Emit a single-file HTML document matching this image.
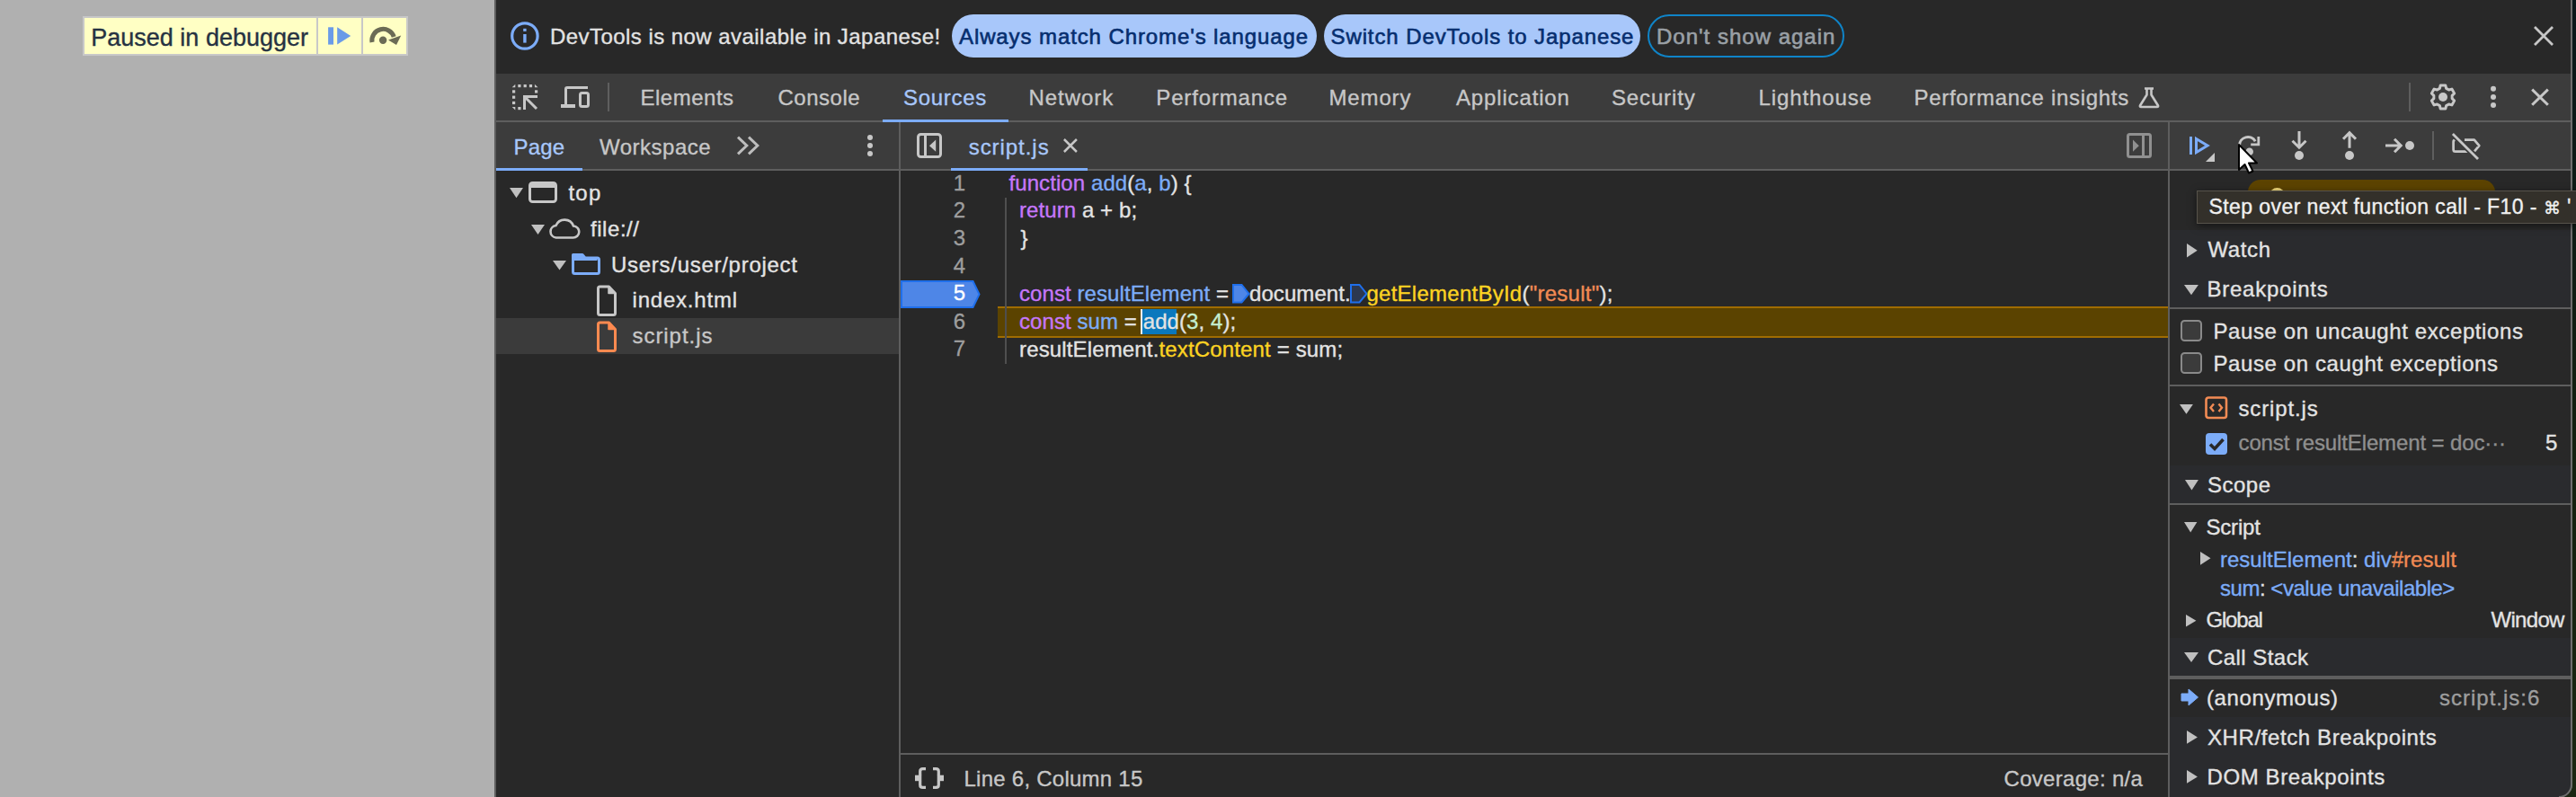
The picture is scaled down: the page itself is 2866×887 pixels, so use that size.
<!DOCTYPE html>
<html><head><meta charset="utf-8">
<style>
*{margin:0;padding:0;box-sizing:border-box}
html,body{width:2866px;height:887px;overflow:hidden;background:#0e120a}
body{position:relative;font-family:"Liberation Sans",sans-serif;font-size:24px;color:#e3e3e3}
.a{position:absolute}
.t{position:absolute;white-space:pre;line-height:40px;height:40px;font-size:24px;-webkit-text-stroke:0.35px currentColor}
svg{position:absolute;overflow:visible}
</style></head><body>
<div class="a" style="left:0px;top:0px;width:550px;height:887px;background:#b0b0b0;"></div>
<div class="a" style="left:550px;top:0px;width:2px;height:887px;background:#5e5e5e;"></div>
<div class="a" style="left:92px;top:18px;width:362px;height:44px;background:#c8c8c8;"></div>
<div class="a" style="left:94px;top:20px;width:258px;height:40px;background:#ffffc4;"></div>
<div class="a" style="left:354px;top:20px;width:48px;height:40px;background:#ffffc4;"></div>
<div class="a" style="left:404px;top:20px;width:48px;height:40px;background:#ffffc4;"></div>
<div class="t" style="left:101.3px;top:21.94px;color:#263242;font-size:27px;letter-spacing:0px;">Paused in debugger</div>
<svg style="left:360px;top:26px;" width="40" height="30" viewBox="0 0 40 30"><rect x="5.1" y="4.3" width="5.9" height="19.3" fill="#6a9be8"/><path d="M15.2 4.3 L30.2 14 L15.2 23.6 Z" fill="#6a9be8"/></svg>
<svg style="left:405px;top:25px;" width="48" height="30" viewBox="0 0 48 30"><path d="M9 22 A 12.5 12.5 0 0 1 33.2 16" fill="none" stroke="#6b6b55" stroke-width="5"/><path d="M27 19.5 L41.2 14.6 L36 25 Z" fill="#6b6b55"/><circle cx="21.1" cy="19.7" r="4.2" fill="#6b6b55"/></svg>
<div class="a" style="left:552px;top:0px;width:2310px;height:887px;background:#282828;"></div>
<div class="a" style="left:2860px;top:0px;width:2px;height:887px;background:#6e6e6e;"></div>
<div class="a" style="left:2862px;top:0px;width:4px;height:887px;background:#0a171a;background:linear-gradient(#0a171a,#14200f 60%,#1b2612)"></div>
<div class="a" style="left:552px;top:0px;width:2308px;height:82px;background:#282828;"></div>
<div class="a" style="left:552px;top:82px;width:2308px;height:52px;background:#3c3c3c;"></div>
<div class="a" style="left:552px;top:134px;width:2308px;height:2px;background:#5e5e5e;"></div>
<div class="a" style="left:552px;top:136px;width:2308px;height:52px;background:#3c3c3c;"></div>
<div class="a" style="left:552px;top:188px;width:2308px;height:2px;background:#5e5e5e;"></div>
<svg style="left:566px;top:23px;" width="36" height="36" viewBox="0 0 36 36"><circle cx="17.9" cy="17" r="14.2" fill="none" stroke="#7cacf8" stroke-width="3.2"/><rect x="16.2" y="8.8" width="3.4" height="3.1" fill="#7cacf8"/><rect x="16.2" y="15" width="3.4" height="9.6" fill="#7cacf8"/></svg>
<div class="t" style="left:612px;top:20.98px;color:#e3e3e3;font-size:24px;letter-spacing:0.45px;">DevTools is now available in Japanese!</div>
<div class="a" style="left:1059px;top:16px;width:406px;height:48px;background:#a8c7fa;border-radius:24px;"></div>
<div class="t" style="left:1067px;top:20.58px;color:#062e6f;font-size:24px;letter-spacing:0.9px;-webkit-text-stroke:0.6px #062e6f;">Always match Chrome's language</div>
<div class="a" style="left:1473px;top:16px;width:352px;height:48px;background:#a8c7fa;border-radius:24px;"></div>
<div class="t" style="left:1480.5px;top:20.58px;color:#062e6f;font-size:24px;letter-spacing:0.9px;-webkit-text-stroke:0.6px #062e6f;">Switch DevTools to Japanese</div>
<div class="a" style="left:1833px;top:16px;width:219px;height:48px;background:transparent;border-radius:24px;border:2px solid #0f84c8;"></div>
<div class="t" style="left:1843px;top:20.58px;color:#9aa0a6;font-size:24px;letter-spacing:1.0px;-webkit-text-stroke:0.6px #9aa0a6;">Don't show again</div>
<svg style="left:2816px;top:26px;" width="28" height="28" viewBox="0 0 28 28"><path d="M4 4 L24 24 M24 4 L4 24" stroke="#c7c7c7" stroke-width="2.8"/></svg>
<svg style="left:570px;top:94px;" width="30" height="30" viewBox="0 0 30 30"><rect x="6.3" y="0.0" width="3.2" height="3.2" fill="#c7c7c7"/><rect x="12.6" y="0.0" width="3.2" height="3.2" fill="#c7c7c7"/><rect x="18.9" y="0.0" width="3.2" height="3.2" fill="#c7c7c7"/><rect x="0.0" y="6.3" width="3.2" height="3.2" fill="#c7c7c7"/><rect x="0.0" y="12.6" width="3.2" height="3.2" fill="#c7c7c7"/><rect x="0.0" y="18.9" width="3.2" height="3.2" fill="#c7c7c7"/><rect x="25.0" y="6.3" width="3.2" height="3.2" fill="#c7c7c7"/><rect x="6.3" y="25.0" width="3.2" height="3.2" fill="#c7c7c7"/><path d="M-0.3 3.3 L3.3 -0.3 V3.3 Z M24.9 -0.3 L28.5 3.3 H24.9 Z M-0.3 24.9 H3.3 V28.5 Z" fill="#c7c7c7"/><path d="M28 13.5 H13.5 V28" fill="none" stroke="#c7c7c7" stroke-width="3"/><path d="M15 15 L27 27" stroke="#c7c7c7" stroke-width="3"/></svg>
<svg style="left:624px;top:96px;" width="34" height="26" viewBox="0 0 34 26"><path d="M30 1.5 H7 Q5.5 1.5 5.5 3 V21" fill="none" stroke="#c7c7c7" stroke-width="3"/><rect x="0" y="20" width="16" height="4" fill="#c7c7c7"/><rect x="21.5" y="7.5" width="9" height="15" rx="2" fill="none" stroke="#c7c7c7" stroke-width="3"/></svg>
<div class="a" style="left:676px;top:92px;width:2px;height:32px;background:#5e5e5e;"></div>
<div class="t" style="left:712.5px;top:89.18px;color:#c7c7c7;font-size:24px;letter-spacing:0.5px;">Elements</div>
<div class="t" style="left:865.5px;top:89.18px;color:#c7c7c7;font-size:24px;letter-spacing:0.5px;">Console</div>
<div class="t" style="left:1005px;top:89.18px;color:#a8c7fa;font-size:24px;letter-spacing:0.7px;">Sources</div>
<div class="t" style="left:1144.5px;top:89.18px;color:#c7c7c7;font-size:24px;letter-spacing:0.95px;">Network</div>
<div class="t" style="left:1286.3px;top:89.18px;color:#c7c7c7;font-size:24px;letter-spacing:0.85px;">Performance</div>
<div class="t" style="left:1478.5px;top:89.18px;color:#c7c7c7;font-size:24px;letter-spacing:0.85px;">Memory</div>
<div class="t" style="left:1620px;top:89.18px;color:#c7c7c7;font-size:24px;letter-spacing:0.85px;">Application</div>
<div class="t" style="left:1793px;top:89.18px;color:#c7c7c7;font-size:24px;letter-spacing:0.85px;">Security</div>
<div class="t" style="left:1956.5px;top:89.18px;color:#c7c7c7;font-size:24px;letter-spacing:0.9px;">Lighthouse</div>
<div class="t" style="left:2129.5px;top:89.18px;color:#c7c7c7;font-size:24px;letter-spacing:0.7px;">Performance insights</div>
<div class="a" style="left:982px;top:133px;width:140px;height:3px;background:#7cacf8;"></div>
<svg style="left:2378px;top:96px;" width="28" height="26" viewBox="0 0 28 26"><path d="M8 2.5 H18 M10.5 2.5 V9.5 L3 21.5 Q2.5 23 4 23 H22 Q23.5 23 23 21.5 L15.5 9.5 V2.5" fill="none" stroke="#c7c7c7" stroke-width="2.6" stroke-linejoin="round"/></svg>
<div class="a" style="left:2680px;top:92px;width:2px;height:32px;background:#5e5e5e;"></div>
<svg style="left:2700px;top:90px;" width="36" height="36" viewBox="0 0 36 36"><path d="M14.37 8.36 L15.23 4.99 L20.77 4.99 L21.63 8.36 L24.53 10.04 L27.88 9.10 L30.65 13.90 L28.16 16.32 L28.16 19.68 L30.65 22.10 L27.88 26.90 L24.53 25.96 L21.63 27.64 L20.77 31.01 L15.23 31.01 L14.37 27.64 L11.47 25.96 L8.12 26.90 L5.35 22.10 L7.84 19.68 L7.84 16.32 L5.35 13.90 L8.12 9.10 L11.47 10.04 Z" fill="none" stroke="#c7c7c7" stroke-width="3" stroke-linejoin="round"/><circle cx="18" cy="18" r="5" fill="#c7c7c7"/></svg>
<svg style="left:2768px;top:92px;" width="12" height="32" viewBox="0 0 12 32"><circle cx="6" cy="6.8" r="3" fill="#c7c7c7"/><circle cx="6" cy="16" r="3" fill="#c7c7c7"/><circle cx="6" cy="24.9" r="3" fill="#c7c7c7"/></svg>
<svg style="left:2812px;top:94px;" width="28" height="28" viewBox="0 0 28 28"><path d="M5.2 5.6 L22.8 22.8 M22.8 5.6 L5.2 22.8" stroke="#c7c7c7" stroke-width="3"/></svg>
<div class="t" style="left:571.5px;top:143.68px;color:#a8c7fa;font-size:24px;letter-spacing:0.15px;">Page</div>
<div class="a" style="left:552px;top:187px;width:96px;height:3px;background:#7cacf8;"></div>
<div class="t" style="left:667px;top:143.68px;color:#c7c7c7;font-size:24px;letter-spacing:0.5px;">Workspace</div>
<svg style="left:816px;top:148px;" width="32" height="28" viewBox="0 0 32 28"><path d="M5 4.6 L14.8 14 L5 23.3 M17 4.6 L26.8 14 L17 23.3" fill="none" stroke="#bdbdbd" stroke-width="3"/></svg>
<svg style="left:962px;top:148px;" width="12" height="28" viewBox="0 0 12 28"><circle cx="6" cy="4.9" r="3" fill="#c7c7c7"/><circle cx="6" cy="14" r="3" fill="#c7c7c7"/><circle cx="6" cy="23.1" r="3" fill="#c7c7c7"/></svg>
<div class="a" style="left:1000px;top:136px;width:2px;height:751px;background:#5e5e5e;"></div>
<svg style="left:1018px;top:146px;" width="32" height="32" viewBox="0 0 32 32"><rect x="3.5" y="3.5" width="25" height="25" rx="3" fill="none" stroke="#c7c7c7" stroke-width="3"/><rect x="10" y="3.5" width="3" height="25" fill="#c7c7c7"/><path d="M23.2 9.6 V22.8 L16 16.2 Z" fill="#c7c7c7"/></svg>
<div class="t" style="left:1077.7px;top:143.68px;color:#a8c7fa;font-size:24px;letter-spacing:0.95px;">script.js</div>
<svg style="left:1178px;top:150px;" width="26" height="26" viewBox="0 0 26 26"><path d="M5.9 5 L19.9 19 M19.9 5 L5.9 19" stroke="#c7c7c7" stroke-width="2.5"/></svg>
<div class="a" style="left:1058px;top:187px;width:152px;height:3px;background:#7cacf8;"></div>
<svg style="left:2364px;top:146px;" width="32" height="32" viewBox="0 0 32 32"><rect x="3.5" y="3.5" width="25" height="25" rx="2" fill="none" stroke="#909090" stroke-width="3"/><rect x="19" y="3.5" width="3" height="25" fill="#909090"/><path d="M9 9.6 V22.8 L15.8 16.2 Z" fill="#909090"/></svg>
<div class="a" style="left:2412px;top:136px;width:2px;height:751px;background:#5e5e5e;"></div>
<svg style="left:2430px;top:146px;" width="40" height="40" viewBox="0 0 40 40"><rect x="6" y="6" width="3" height="20" fill="#7cacf8"/><path d="M13.5 8.5 L26 16 L13.5 23.5 Z" fill="none" stroke="#7cacf8" stroke-width="3"/><path d="M34 24 V34 H24 Z" fill="#c7c7c7"/></svg>
<svg style="left:2484px;top:146px;" width="36" height="36" viewBox="0 0 36 36"><path d="M7.5 16 A 9.5 9.5 0 0 1 25.2 11.2" fill="none" stroke="#c7c7c7" stroke-width="3"/><path d="M28.8 6 V14.8 H20.2" fill="none" stroke="#c7c7c7" stroke-width="2.8"/><circle cx="18.7" cy="22.7" r="4.3" fill="#c7c7c7"/></svg>
<svg style="left:2540px;top:140px;" width="36" height="42" viewBox="0 0 36 42"><path d="M18 6 V24.5 M10.5 16.7 L18 24.2 L25.5 16.7" fill="none" stroke="#c7c7c7" stroke-width="3"/><circle cx="18" cy="33" r="5" fill="#c7c7c7"/></svg>
<svg style="left:2596px;top:140px;" width="36" height="42" viewBox="0 0 36 42"><path d="M18 24.8 V7.5 M11 14.8 L18 7.6 L25 14.8" fill="none" stroke="#c7c7c7" stroke-width="3"/><circle cx="18" cy="33" r="5" fill="#c7c7c7"/></svg>
<svg style="left:2650px;top:146px;" width="40" height="32" viewBox="0 0 40 32"><path d="M4 16 H21.5 M14 8.8 L21.2 16 L14 23.3" fill="none" stroke="#c7c7c7" stroke-width="3"/><circle cx="31" cy="16" r="5" fill="#c7c7c7"/></svg>
<div class="a" style="left:2706px;top:146px;width:2px;height:32px;background:#5e5e5e;"></div>
<svg style="left:2722px;top:144px;" width="44" height="38" viewBox="0 0 44 38"><path d="M20 11.6 H30.8 L36.3 18.1 L30.8 24.6 H9.8 Q7.6 24.6 7.6 22.4 V13.8 Q7.6 11.6 9.8 11.6" fill="none" stroke="#c7c7c7" stroke-width="2.7" stroke-linejoin="round"/><path d="M6.9 5 L35 32.9" stroke="#3c3c3c" stroke-width="6.5"/><path d="M6.9 5 L35 32.9" stroke="#c7c7c7" stroke-width="2.8"/></svg>
<div class="a" style="left:552px;top:354px;width:448px;height:40px;background:#3b3b3b;"></div>
<svg style="left:567.3px;top:209.3px;" width="15.0" height="11.299999999999983" viewBox="0 0 15.0 11.299999999999983"><path d="M0 0 H15.0 L7.5 11.3 Z" fill="#c0c0c0"/></svg>
<svg style="left:586px;top:200px;" width="36" height="28" viewBox="0 0 36 28"><rect x="3.5" y="3.5" width="29" height="21" rx="3" fill="none" stroke="#c7c7c7" stroke-width="3"/><rect x="3.5" y="3.5" width="29" height="5.5" fill="#c7c7c7"/></svg>
<div class="t" style="left:632.5px;top:194.98px;color:#e3e3e3;font-size:24px;letter-spacing:1.2px;">top</div>
<svg style="left:591px;top:250px;" width="15" height="11" viewBox="0 0 15 11"><path d="M0 0 H15.0 L7.5 11.0 Z" fill="#c0c0c0"/></svg>
<svg style="left:608px;top:240px;" width="40" height="28" viewBox="0 0 40 28"><path d="M10.5 24.5 H29.5 A 6.5 6.5 0 0 0 30 11.5 A 10.5 10.5 0 0 0 10.5 11 A 6.8 6.8 0 0 0 10.5 24.5 Z" fill="none" stroke="#c7c7c7" stroke-width="2.6"/></svg>
<div class="t" style="left:657px;top:234.98px;color:#e3e3e3;font-size:24px;letter-spacing:0.55px;">file://</div>
<svg style="left:615.2px;top:290px;" width="15.0" height="10.399999999999977" viewBox="0 0 15.0 10.399999999999977"><path d="M0 0 H15.0 L7.5 10.4 Z" fill="#c0c0c0"/></svg>
<svg style="left:634px;top:280px;" width="36" height="28" viewBox="0 0 36 28"><path d="M3.5 3.5 H14 L17 7 H30.5 Q32.5 7 32.5 9 V22.5 Q32.5 24.5 30.5 24.5 H5.5 Q3.5 24.5 3.5 22.5 Z" fill="none" stroke="#7cacf8" stroke-width="3" stroke-linejoin="round"/><path d="M3.5 3.5 H14 L17 7 H30.5 V10 H3.5 Z" fill="#7cacf8"/></svg>
<div class="t" style="left:680px;top:274.88px;color:#e3e3e3;font-size:24px;letter-spacing:0.72px;">Users/user/project</div>
<svg style="left:662px;top:316.5px;" width="28" height="36" viewBox="0 0 28 36"><path d="M3.5 4 Q3.5 2 5.5 2 H15.5 L22.5 9.5 V31.5 Q22.5 33.5 20.5 33.5 H5.5 Q3.5 33.5 3.5 31.5 Z" fill="none" stroke="#c7c7c7" stroke-width="3" stroke-linejoin="round"/><path d="M15 2 L22.5 9.5 H15 Z" fill="#c7c7c7" stroke="#c7c7c7" stroke-width="1.5" stroke-linejoin="round"/></svg>
<div class="t" style="left:703.5px;top:314.38px;color:#e3e3e3;font-size:24px;letter-spacing:0.8px;">index.html</div>
<svg style="left:662px;top:356.5px;" width="28" height="36" viewBox="0 0 28 36"><path d="M3.5 4 Q3.5 2 5.5 2 H15.5 L22.5 9.5 V31.5 Q22.5 33.5 20.5 33.5 H5.5 Q3.5 33.5 3.5 31.5 Z" fill="none" stroke="#ff8a50" stroke-width="3" stroke-linejoin="round"/><path d="M15 2 L22.5 9.5 H15 Z" fill="#ff8a50" stroke="#ff8a50" stroke-width="1.5" stroke-linejoin="round"/></svg>
<div class="t" style="left:703.5px;top:354.18px;color:#c7c7c7;font-size:24px;letter-spacing:0.95px;">script.js</div>
<div class="a" style="left:1110px;top:341px;width:1302px;height:35px;background:#5b4300;border-top:2px solid #a06c00;border-bottom:2px solid #a06c00"></div>
<svg style="left:1002px;top:311px;" width="90" height="33" viewBox="0 0 90 33"><path d="M1 2 H80.5 L87.5 16.5 L80.5 31 H1 Z" fill="#4e86e7" stroke="#1f6feb" stroke-width="2"/></svg>
<div class="t" style="left:994px;width:80px;text-align:right;top:183.68px;color:#9e9e9e;font-size:24px">1</div>
<div class="t" style="left:994px;width:80px;text-align:right;top:214.48px;color:#9e9e9e;font-size:24px">2</div>
<div class="t" style="left:994px;width:80px;text-align:right;top:245.28px;color:#9e9e9e;font-size:24px">3</div>
<div class="t" style="left:994px;width:80px;text-align:right;top:276.08px;color:#9e9e9e;font-size:24px">4</div>
<div class="t" style="left:994px;width:80px;text-align:right;top:305.68px;color:#ffffff;font-size:24px">5</div>
<div class="t" style="left:994px;width:80px;text-align:right;top:337.68px;color:#9e9e9e;font-size:24px">6</div>
<div class="t" style="left:994px;width:80px;text-align:right;top:368.48px;color:#9e9e9e;font-size:24px">7</div>
<div class="a" style="left:1118px;top:220px;width:2px;height:185px;background:#4f4f4f;"></div>
<div class="t" style="left:1122.5px;top:183.68px;color:#e3e3e3;font-size:24px;letter-spacing:0.08px"><span style="color:#c677fb">function</span> <span style="color:#7cacf8">add</span>(<span style="color:#7cacf8">a</span>, <span style="color:#7cacf8">b</span>) {</div>
<div class="t" style="left:1134px;top:214.48px;color:#e3e3e3;font-size:24px;letter-spacing:0.08px"><span style="color:#c677fb">return</span> a + b;</div>
<div class="t" style="left:1135.5px;top:245.28px;color:#e3e3e3;font-size:24px;letter-spacing:0.08px">}</div>
<div class="t" style="left:1134px;top:306.88px;color:#e3e3e3;font-size:24px;letter-spacing:0.08px"><span style="color:#c677fb">const</span> <span style="color:#7cacf8">resultElement</span> = </div>
<svg style="left:1371px;top:316px;" width="20" height="22" viewBox="0 0 20 22"><path d="M1 1 H10.5 L18.5 11 L10.5 20.5 H1 Z" fill="#4e86e7" stroke="#1f6feb" stroke-width="2"/></svg>
<div class="t" style="left:1390px;top:306.88px;color:#e3e3e3;font-size:24px;letter-spacing:0.08px">document.</div>
<svg style="left:1502px;top:316px;" width="20" height="22" viewBox="0 0 20 22"><path d="M1 1 H10.5 L18.5 11 L10.5 20.5 H1 Z" fill="#2c3850" stroke="#1f6feb" stroke-width="2"/></svg>
<div class="t" style="left:1520.5px;top:306.88px;color:#e3e3e3;font-size:24px;letter-spacing:0.25px"><span style="color:#fcd322">getElementById</span>(<span style="color:#f28b54">"result"</span>);</div>
<div class="a" style="left:1269px;top:344px;width:40px;height:28px;background:#0a78bd;"></div>
<div class="a" style="left:1269px;top:344px;width:2px;height:28px;background:#f0f0f0;"></div>
<div class="t" style="left:1134px;top:337.68px;color:#e3e3e3;font-size:24px;letter-spacing:0.08px"><span style="color:#c677fb">const</span> <span style="color:#7cacf8">sum</span> = add(<span style="color:#c4eed0">3</span>, <span style="color:#c4eed0">4</span>);</div>
<div class="t" style="left:1134px;top:369.28px;color:#e3e3e3;font-size:24px;letter-spacing:0.15px">resultElement.<span style="color:#fcd322">textContent</span> = sum;</div>
<div class="a" style="left:1002px;top:838px;width:1410px;height:2px;background:#5e5e5e;"></div>
<svg style="left:1014px;top:850px;" width="40" height="32" viewBox="0 0 40 32"><path d="M16 5.6 H12.7 Q9.7 5.6 9.7 8.6 V13 M9.7 19 V23.4 Q9.7 26.4 12.7 26.4 H16 M24 5.6 H27.3 Q30.3 5.6 30.3 8.6 V13 M30.3 19 V23.4 Q30.3 26.4 27.3 26.4 H24" fill="none" stroke="#c7c7c7" stroke-width="3.2"/><rect x="4" y="12.7" width="7.3" height="6.5" fill="#c7c7c7"/><rect x="28.7" y="12.7" width="7.3" height="6.5" fill="#c7c7c7"/></svg>
<div class="t" style="left:1072.5px;top:846.88px;color:#c7c7c7;font-size:24px;letter-spacing:0.25px;">Line 6, Column 15</div>
<div class="t" style="left:2229.5px;top:846.88px;color:#c7c7c7;font-size:24px;letter-spacing:0.3px;">Coverage: n/a</div>
<div class="a" style="left:2414px;top:190px;width:446px;height:66px;background:#282828;"></div>
<div class="a" style="left:2501px;top:200px;width:275px;height:48px;background:#5c4300;border-radius:14px"></div>
<div class="a" style="left:2525px;top:209px;width:17px;height:17px;border-radius:50%;background:#f2da7a"></div>
<div class="a" style="left:2414px;top:256px;width:446px;height:86px;background:#2a2b2e;"></div>
<svg style="left:2433.4px;top:270.7px;" width="11.699999999999818" height="15.400000000000034" viewBox="0 0 11.699999999999818 15.400000000000034"><path d="M0 0 L11.7 7.7 L0 15.4 Z" fill="#c0c0c0"/></svg>
<div class="t" style="left:2456.5px;top:257.98px;color:#e3e3e3;font-size:24px;letter-spacing:0.6px;">Watch</div>
<svg style="left:2430px;top:316.5px;" width="15.900000000000091" height="11.300000000000011" viewBox="0 0 15.900000000000091 11.300000000000011"><path d="M0 0 H15.9 L8.0 11.3 Z" fill="#c0c0c0"/></svg>
<div class="t" style="left:2455.5px;top:301.58px;color:#e3e3e3;font-size:24px;letter-spacing:0.75px;">Breakpoints</div>
<div class="a" style="left:2414px;top:342px;width:446px;height:2px;background:#5e5e5e;"></div>
<div class="a" style="left:2426.2px;top:356.4px;width:23.7px;height:23.5px;border:2px solid #8a8a8a;border-radius:4.5px;background:#3b3b3b"></div>
<div class="t" style="left:2462.5px;top:348.78px;color:#e3e3e3;font-size:24px;letter-spacing:0.6px;">Pause on uncaught exceptions</div>
<div class="a" style="left:2426.2px;top:392.2px;width:23.7px;height:23.5px;border:2px solid #8a8a8a;border-radius:4.5px;background:#3b3b3b"></div>
<div class="t" style="left:2462.5px;top:384.88px;color:#e3e3e3;font-size:24px;letter-spacing:0.6px;">Pause on caught exceptions</div>
<div class="a" style="left:2414px;top:428px;width:446px;height:2px;background:#5e5e5e;"></div>
<svg style="left:2425.4px;top:450px;" width="14.900000000000091" height="10.800000000000011" viewBox="0 0 14.900000000000091 10.800000000000011"><path d="M0 0 H14.9 L7.5 10.8 Z" fill="#c0c0c0"/></svg>
<svg style="left:2452px;top:440px;" width="28" height="28" viewBox="0 0 28 28"><rect x="2.5" y="2.5" width="22.5" height="22.5" rx="2.5" fill="none" stroke="#f28b54" stroke-width="2.6"/><path d="M11 9.5 L7.5 13.8 L11 18 M16.5 9.5 L20 13.8 L16.5 18" fill="none" stroke="#f28b54" stroke-width="2.4"/></svg>
<div class="t" style="left:2490.5px;top:434.68px;color:#e3e3e3;font-size:24px;letter-spacing:0.87px;">script.js</div>
<div class="a" style="left:2454px;top:482px;width:24px;height:24px;background:#7cacf8;border-radius:4px"></div>
<svg style="left:2454px;top:482px;" width="24" height="24" viewBox="0 0 24 24"><path d="M5 12.5 L10 17.5 L19.5 7" fill="none" stroke="#282828" stroke-width="3.6"/></svg>
<div class="t" style="left:2490.5px;top:473.38px;color:#8f8f8f;font-size:24px;letter-spacing:-0.12px;">const resultElement = doc···</div>
<div class="t" style="left:2832px;top:473.38px;color:#e3e3e3;font-size:24px;letter-spacing:0px;">5</div>
<div class="a" style="left:2414px;top:518px;width:446px;height:42px;background:#2a2b2e;"></div>
<svg style="left:2430.7px;top:534.2px;" width="14.900000000000091" height="11.399999999999977" viewBox="0 0 14.900000000000091 11.399999999999977"><path d="M0 0 H14.9 L7.5 11.4 Z" fill="#c0c0c0"/></svg>
<div class="t" style="left:2456px;top:519.88px;color:#e3e3e3;font-size:24px;letter-spacing:0.5px;">Scope</div>
<div class="a" style="left:2414px;top:560px;width:446px;height:2px;background:#5e5e5e;"></div>
<svg style="left:2429.7px;top:581.1px;" width="14.400000000000091" height="11.600000000000023" viewBox="0 0 14.400000000000091 11.600000000000023"><path d="M0 0 H14.4 L7.2 11.6 Z" fill="#c0c0c0"/></svg>
<div class="t" style="left:2454.5px;top:566.68px;color:#e3e3e3;font-size:24px;letter-spacing:-0.2px;">Script</div>
<svg style="left:2447.7px;top:614.2px;" width="11.5" height="14.699999999999932" viewBox="0 0 11.5 14.699999999999932"><path d="M0 0 L11.5 7.3 L0 14.7 Z" fill="#c0c0c0"/></svg>
<div class="t" style="left:2470px;top:603.18px;color:#e3e3e3;font-size:24px;letter-spacing:0px;"><span style="color:#7cacf8">resultElement</span>: <span style="color:#7cacf8">div</span><span style="color:#f28b54">#result</span></div>
<div class="t" style="left:2470px;top:634.88px;color:#e3e3e3;font-size:24px;letter-spacing:-0.47px;"><span style="color:#7cacf8">sum</span>: <span style="color:#7cacf8">&lt;value unavailable&gt;</span></div>
<svg style="left:2431.7px;top:683.5px;" width="11.400000000000091" height="13.600000000000023" viewBox="0 0 11.400000000000091 13.600000000000023"><path d="M0 0 L11.4 6.8 L0 13.6 Z" fill="#c0c0c0"/></svg>
<div class="t" style="left:2454.5px;top:669.58px;color:#e3e3e3;font-size:24px;letter-spacing:-1.2px;">Global</div>
<div class="t" style="left:2771.5px;top:669.58px;color:#e3e3e3;font-size:24px;letter-spacing:-0.7px;">Window</div>
<div class="a" style="left:2414px;top:710px;width:446px;height:42px;background:#2a2b2e;"></div>
<svg style="left:2430px;top:725.5px;" width="16" height="11.0" viewBox="0 0 16 11.0"><path d="M0 0 H16.0 L8.0 11.0 Z" fill="#c0c0c0"/></svg>
<div class="t" style="left:2456px;top:712.38px;color:#e3e3e3;font-size:24px;letter-spacing:0.45px;">Call Stack</div>
<div class="a" style="left:2414px;top:752px;width:446px;height:4px;background:#5e5e5e;"></div>
<svg style="left:2424px;top:764px;" width="24" height="24" viewBox="0 0 24 24"><path d="M3 8 H11 V3 L21.5 12 L11 21 V16 H3 Z" fill="#7cacf8" stroke="#7cacf8" stroke-width="1" stroke-linejoin="round"/></svg>
<div class="t" style="left:2455px;top:757.38px;color:#e3e3e3;font-size:24px;letter-spacing:0.6px;">(anonymous)</div>
<div class="t" style="left:2714px;top:757.38px;color:#9e9e9e;font-size:24px;letter-spacing:1.0px;">script.js:6</div>
<div class="a" style="left:2414px;top:797.5px;width:446px;height:90px;background:#2a2b2e;"></div>
<svg style="left:2433.4px;top:812.8px;" width="11.900000000000091" height="14.800000000000068" viewBox="0 0 11.900000000000091 14.800000000000068"><path d="M0 0 L11.9 7.4 L0 14.8 Z" fill="#c0c0c0"/></svg>
<div class="t" style="left:2456px;top:800.98px;color:#e3e3e3;font-size:24px;letter-spacing:0.6px;">XHR/fetch Breakpoints</div>
<svg style="left:2433.4px;top:857px;" width="11.900000000000091" height="14.799999999999955" viewBox="0 0 11.900000000000091 14.799999999999955"><path d="M0 0 L11.9 7.4 L0 14.8 Z" fill="#c0c0c0"/></svg>
<div class="t" style="left:2455.5px;top:844.98px;color:#e3e3e3;font-size:24px;letter-spacing:0.6px;">DOM Breakpoints</div>
<div class="a" style="left:2444px;top:211.5px;width:430px;height:37px;background:#33302a;border:1px solid #57534b;box-shadow:0 2px 8px rgba(0,0,0,0.5)"></div>
<div class="t" style="left:2457.5px;top:210.23px;color:#f0f0f0;font-size:23px;letter-spacing:0.42px;">Step over next function call - F10 - <span style='font-size:19px'>⌘</span> '</div>
<svg style="left:2489px;top:159px;" width="30" height="38" viewBox="0 0 30 38"><path d="M2 2 V30 L8.5 24 L13 33.5 L17.5 31.5 L13 22.5 L22 22.5 Z" fill="#ffffff" stroke="#000000" stroke-width="2" stroke-linejoin="round"/></svg>
<svg style="left:2836px;top:860px;" width="30" height="27" viewBox="0 0 30 27"><path d="M26 13 A15 15 0 0 1 16.4 27 H30 V13 Z" fill="#1b2612"/><path d="M25 13 A14 14 0 0 1 11 27" fill="none" stroke="#6e6e6e" stroke-width="2"/></svg>
</body></html>
